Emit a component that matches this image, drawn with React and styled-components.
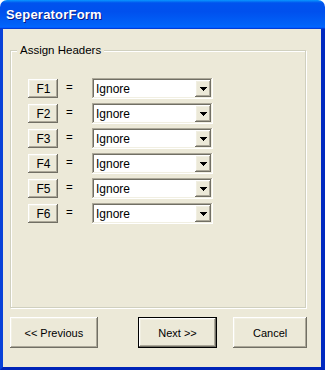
import React from "react";
import styled, { createGlobalStyle } from "styled-components";

const Global = createGlobalStyle`
  html, body { margin: 0; padding: 0; background: #ffffff; }
  * { box-sizing: border-box; }
`;

const Window = styled.div`
  width: 325px;
  height: 370px;
  display: flex;
  flex-direction: column;
  font-family: "Liberation Sans", Arial, sans-serif;
  font-size: 11px;
  color: #000;
`;

const TitleBar = styled.div`
  height: 29px;
  flex-shrink: 0;
  display: flex;
  align-items: center;
  padding-left: 6px;
  padding-bottom: 1px;
  border-radius: 7px 7px 0 0;
  background: linear-gradient(
    180deg,
    #0997ff 0%,
    #0053ee 10%,
    #0050ee 40%,
    #0062f8 85%,
    #0066ff 92%,
    #005bff 95%,
    #003dd7 97%,
    #003dd7 100%
  );
`;

const Title = styled.span`
  color: #ffffff;
  font-family: "Liberation Sans", Arial, sans-serif;
  font-weight: bold;
  font-size: 13px;
  text-shadow: 1px 1px #0a1883;
  letter-spacing: 0.2px;
`;

const Body = styled.div`
  flex: 1;
  display: flex;
  flex-direction: column;
  background: #ece9d8;
  border-left: 3px solid #0841d8;
  border-right: 4px solid #0029c0;
  border-bottom: 3px solid #0024b8;
  padding: 21px 14px 0 7px;
`;

const GroupBox = styled.div`
  position: relative;
  height: 258px;
  width: 296px;
  border: 1px solid #d0d0bf;
  box-shadow: inset 1px 1px #ffffff, 1px 1px #ffffff;
  padding: 27px 0 0 17px;
`;

const Legend = styled.span`
  position: absolute;
  top: -7px;
  left: 6px;
  padding: 0 3px;
  background: #ece9d8;
  line-height: 13px;
  font-size: 11.5px;
`;

const Rows = styled.div`
  display: flex;
  flex-direction: column;
  gap: 4px;
`;

const Row = styled.div`
  display: grid;
  grid-template-columns: 30px 34px 121px;
  align-items: center;
  height: 21px;
`;

const bevel = `
  background: #ece9d8;
  box-shadow: inset -1px -1px #716f64, inset 1px 1px #ffffff,
    inset -2px -2px #aca899, inset 2px 2px #f1efe2;
`;

const FButton = styled.div`
  ${bevel}
  height: 19px;
  display: flex;
  align-items: center;
  justify-content: center;
  font-size: 12px;
  padding-left: 1px;
`;

const Equals = styled.span`
  padding-left: 8px;
  padding-bottom: 3px;
  font-size: 11.5px;
`;

const Combo = styled.div`
  height: 21px;
  display: flex;
  align-items: center;
  background: #ffffff;
  padding: 2px 2px 2px 4px;
  box-shadow: inset -1px -1px #ffffff, inset 1px 1px #aca899,
    inset -2px -2px #f1efe2, inset 2px 2px #716f64;
`;

const ComboText = styled.span`
  flex: 1;
  font-size: 12px;
`;

const DropButton = styled.div`
  ${bevel}
  width: 16px;
  height: 17px;
  display: flex;
  align-items: center;
  justify-content: center;
`;

const ButtonBar = styled.div`
  display: flex;
  margin-top: 9px;
`;

const DialogButton = styled.div`
  ${bevel}
  width: ${(p) => p.$w}px;
  margin-left: ${(p) => p.$ml || 0}px;
  height: 31px;
  display: flex;
  align-items: center;
  justify-content: center;
  font-size: 11px;
  ${(p) =>
    p.$default &&
    `
    border: 1px solid #000000;
  `}
`;

const Arrow = () => (
  <svg width="7" height="4" viewBox="0 0 7 4" shapeRendering="crispEdges">
    <path d="M0 0h7v1H0zM1 1h5v1H1zM2 2h3v1H2zM3 3h1v1H3z" fill="#000" />
  </svg>
);

const fields = ["F1", "F2", "F3", "F4", "F5", "F6"];

export default function App() {
  return (
    <>
      <Global />
      <Window>
        <TitleBar>
          <Title>SeperatorForm</Title>
        </TitleBar>
        <Body>
          <GroupBox>
            <Legend>Assign Headers</Legend>
            <Rows>
              {fields.map((f) => (
                <Row key={f}>
                  <FButton>{f}</FButton>
                  <Equals>=</Equals>
                  <Combo>
                    <ComboText>Ignore</ComboText>
                    <DropButton>
                      <Arrow />
                    </DropButton>
                  </Combo>
                </Row>
              ))}
            </Rows>
          </GroupBox>
          <ButtonBar>
            <DialogButton $w={88}>&lt;&lt; Previous</DialogButton>
            <DialogButton $w={80} $ml={40} $default>
              Next &gt;&gt;
            </DialogButton>
            <DialogButton $w={74} $ml={16}>
              Cancel
            </DialogButton>
          </ButtonBar>
        </Body>
      </Window>
    </>
  );
}
